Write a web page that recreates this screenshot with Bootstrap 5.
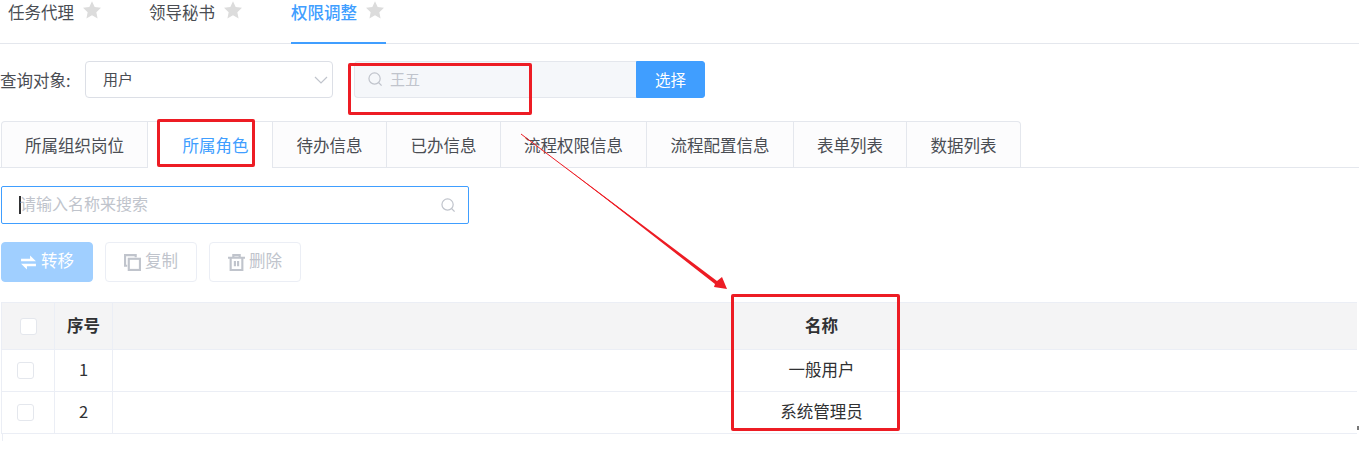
<!DOCTYPE html>
<html lang="zh">
<head>
<meta charset="utf-8">
<link href="https://cdn.jsdelivr.net/npm/bootstrap@5.3.0/dist/css/bootstrap.min.css" rel="stylesheet">
<style>
html,body{height:464px;overflow:hidden;background:#fff}
body{font-family:"Noto Sans CJK SC","Noto Sans",sans-serif;color:#303133;font-size:16.5px;position:relative}
.page-tabs{height:44px;border-bottom:1px solid #e4e7ed;padding-left:8px;gap:0}
.page-tab{height:44px;line-height:24px;color:#4a4d53;display:flex;align-items:flex-start;margin-bottom:-1px}
.page-tab svg{width:20px;height:20px;margin:0 0 0 8px;fill:#dcdcdc}
.tab-a{width:141px}.tab-b{width:142px}
.tab-c{color:#409eff;font-weight:500;border-bottom:2px solid #409eff;width:95px}
.query-row{margin-top:17px;height:38px}
.query-label{width:85px;color:#4a4d53;line-height:38px;white-space:nowrap}
.sel-box{width:248px;height:37px;border:1px solid #dcdfe6;border-radius:4px;font-size:15px;padding:0 4px 0 17px;color:#4a4d53}
.pick-group{margin-left:21px;width:351px;height:37px}
.pick-input{width:282px;background:#f5f7fa;border:1px solid #e4e7ed;border-right:0;border-radius:4px 0 0 4px;color:#c0c4cc;font-size:15px;padding-left:13px;gap:7px}
.pick-btn{width:69px;background:#409eff;border:1px solid #409eff;color:#fff;font-size:15.5px;border-radius:0 3px 3px 0;padding:0}
.sub-tabs{margin-top:22px;height:47px;border-bottom:1px solid #e4e7ed;padding-left:1px;flex-wrap:nowrap}
.sub-tab{height:46px;line-height:46px;text-align:center;color:#4a4d53;background:#fcfcfd;border:1px solid #e4e7ed;border-left:0;border-bottom:0;white-space:nowrap}
.sub-tab:first-child{border-left:1px solid #e4e7ed;border-top-left-radius:4px}
.sub-tab:last-child{border-top-right-radius:4px}
.sub-on{color:#409eff;background:#fff;height:47px;padding-left:11px}
.find-box{margin:18px 0 0 1px;width:468px;height:38px;border:1px solid #409eff;border-radius:2px;padding:0 12px 0 17px;color:#c0c4cc;font-size:16px}
.find-text{padding-bottom:4px}
.caret-bar{width:2px;height:18px;background:#303133;margin-right:-1px}
.act-row{margin:18px 0 0 1px;gap:12px;height:40px}
.act-btn{width:92px;height:40px;border:1px solid #ebeef5;border-radius:4px;color:#c0c4cc;font-size:16.5px;padding:0 0 3px;gap:4px;background:#fff}
.act-primary{background:#a0cfff;border-color:#a0cfff;color:#fff}
.act-btn svg{width:17px;height:17px;margin-top:3px}
.grid-wrap{margin:20px 0 0 1px;width:1356px;overflow:hidden}
.grid-table{width:1530px;table-layout:fixed;margin:0;border-color:#ebeef5;--bs-table-border-color:#ebeef5;color:#303133}
.grid-table th,.grid-table td{text-align:center;vertical-align:middle;padding:0 0 2px;border:1px solid #ebeef5;font-size:16.5px}
.grid-table thead th{height:47px;background:#f4f4f5;font-weight:700;--bs-table-bg:#f4f4f5}
.grid-table tbody td{height:42px}
.tick-box{display:block;width:17px;height:17px;border:1px solid #e4e7ed;border-radius:3px;background:#fff;margin:2px 0 0 15px}
.head-tick{margin-left:18px}
.tail-stub{width:1px;height:7px;background:#ebeef5;margin-left:1px}
.mark-box{position:absolute;border:3px solid #ed1c24;border-radius:2px;pointer-events:none}
.mark-one{left:348px;top:63px;width:184px;height:52px}
.mark-two{left:157px;top:119px;width:98px;height:48px}
.mark-three{left:731px;top:294px;width:169px;height:137px}
.mark-arrow{position:absolute;left:0;top:0;width:1359px;height:464px;pointer-events:none}
.edge-tick{position:absolute;left:1357px;top:426px;width:2px;height:4px;background:#777}
</style>
</head>
<body>
<div class="page-tabs d-flex">
  <div class="page-tab tab-a">任务代理<svg viewBox="0 0 24 24"><path d="M12 1.500l3.200 7 7.600.9-5.600 5.200 1.500 7.600L12 18.400l-6.700 3.800 1.500-7.600L1.200 9.400l7.600-.9z"/></svg></div>
  <div class="page-tab tab-b">领导秘书<svg viewBox="0 0 24 24"><path d="M12 1.500l3.200 7 7.600.9-5.600 5.200 1.500 7.600L12 18.400l-6.700 3.800 1.500-7.600L1.200 9.400l7.600-.9z"/></svg></div>
  <div class="page-tab tab-c">权限调整<svg viewBox="0 0 24 24"><path d="M12 1.500l3.200 7 7.600.9-5.600 5.200 1.500 7.600L12 18.400l-6.700 3.800 1.500-7.600L1.200 9.400l7.600-.9z"/></svg></div>
</div>

<div class="query-row d-flex">
  <div class="query-label">查询对象:</div>
  <div class="sel-box d-flex align-items-center justify-content-between">
    <span>用户</span>
    <svg width="14" height="14" viewBox="0 0 14 14" fill="none" stroke="#c0c4cc" stroke-width="1.2"><path d="M1 4l6 6 6-6"/></svg>
  </div>
  <div class="pick-group d-flex">
    <div class="pick-input d-flex align-items-center">
      <svg width="15" height="15" viewBox="0 0 16 16" fill="none" stroke="#c0c4cc" stroke-width="1.3"><circle cx="7" cy="7" r="6"/><path d="M11.500 11.500l3 3"/></svg>
      <span>王五</span>
    </div>
    <button type="button" class="btn pick-btn">选择</button>
  </div>
</div>

<div class="sub-tabs d-flex">
  <div class="sub-tab" style="width:147px">所属组织岗位</div>
  <div class="sub-tab sub-on" style="width:125px">所属角色</div>
  <div class="sub-tab" style="width:114px">待办信息</div>
  <div class="sub-tab" style="width:114px">已办信息</div>
  <div class="sub-tab" style="width:146px">流程权限信息</div>
  <div class="sub-tab" style="width:147px">流程配置信息</div>
  <div class="sub-tab" style="width:113px">表单列表</div>
  <div class="sub-tab" style="width:114px">数据列表</div>
</div>

<div class="find-box d-flex align-items-center">
  <span class="caret-bar"></span>
  <span class="flex-grow-1 find-text">请输入名称来搜索</span>
  <svg width="15" height="15" viewBox="0 0 16 16" fill="none" stroke="#c0c4cc" stroke-width="1.3"><circle cx="7" cy="7" r="6"/><path d="M11.500 11.500l3 3"/></svg>
</div>

<div class="act-row d-flex">
  <button type="button" class="btn act-btn act-primary d-flex align-items-center justify-content-center">
    <svg viewBox="0 0 16 16" fill="#fff"><path d="M1 4.500h8.500V1.500L15 6.800H1zM15 9.200v2.300H6.500v3L1 9.200z"/></svg>转移
  </button>
  <button type="button" class="btn act-btn d-flex align-items-center justify-content-center">
    <svg viewBox="0 0 16 16" fill="none" stroke="#c0c4cc" stroke-width="2"><path d="M11 3V1H1v10h2"/><rect x="4.500" y="4.500" width="10.500" height="10.500"/></svg>复制
  </button>
  <button type="button" class="btn act-btn d-flex align-items-center justify-content-center">
    <svg viewBox="0 0 16 16" fill="none" stroke="#c0c4cc" stroke-width="2"><path d="M0 3.500h16M5 3.500V1h6v2.500M2.500 3.500V15h11V3.500M6.500 6.500v5M9.500 6.500v5"/></svg>删除
  </button>
</div>

<div class="grid-wrap">
  <table class="table grid-table">
    <colgroup><col style="width:53px"><col style="width:58px"><col></colgroup>
    <thead>
      <tr><th><span class="tick-box head-tick"></span></th><th>序号</th><th>名称</th></tr>
    </thead>
    <tbody>
      <tr><td><span class="tick-box"></span></td><td>1</td><td>一般用户</td></tr>
      <tr><td><span class="tick-box"></span></td><td>2</td><td>系统管理员</td></tr>
    </tbody>
  </table>
  <div class="tail-stub"></div>
</div>

<div class="mark-box mark-one"></div>
<div class="mark-box mark-two"></div>
<div class="mark-box mark-three"></div>
<svg class="mark-arrow" viewBox="0 0 1359 464">
  <line x1="521" y1="134" x2="640" y2="224" stroke="#ed1c24" stroke-width="1"/>
  <polygon points="560,163 717,281 722,277 727,289 714,287 715,284" fill="#ed1c24"/>
</svg>
<div class="edge-tick"></div>
</body>
</html>
